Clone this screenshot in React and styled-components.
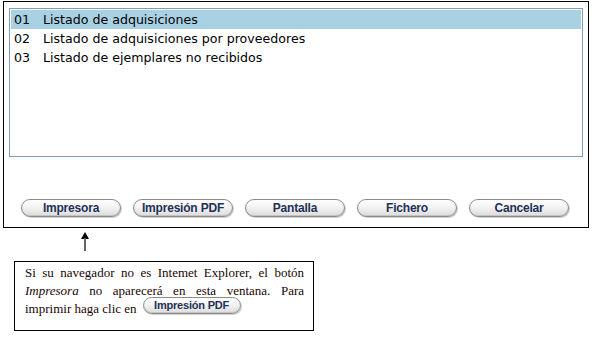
import React from "react";
import styled, { createGlobalStyle } from "styled-components";

const Global = createGlobalStyle`
  html, body { margin: 0; padding: 0; background: #fff; }
  body { font-family: "Liberation Sans", Arial, sans-serif; }
`;

const Page = styled.div`
  width: 594px;
  height: 343px;
  position: relative;
  overflow: hidden;
`;

const Frame = styled.div`
  box-sizing: border-box;
  margin: 1px 0 0 3px;
  width: 586px;
  height: 227px;
  border: 1px solid #000;
  padding: 6px 0 0 5px;
  display: flex;
  flex-direction: column;
`;

const ListBox = styled.div`
  box-sizing: border-box;
  width: 574px;
  height: 149px;
  border: 1px solid #7f9db9;
  padding: 1px 1px 0 1px;
  background: #fff;
`;

const Item = styled.div`
  display: flex;
  height: 19px;
  line-height: 19px;
  padding-left: 3px;
  font-family: "DejaVu Sans", Verdana, sans-serif;
  font-size: 12.6px;
  color: #000;
  white-space: pre;
  background: ${(p) => (p.$selected ? "#a9d1e4" : "transparent")};
`;

const Num = styled.span`
  width: 29px;
  flex: none;
`;

const ButtonRow = styled.div`
  display: flex;
  gap: 12px;
  margin: 42px 0 0 12px;
`;

const PillButton = styled.button`
  box-sizing: border-box;
  width: ${(p) => p.$w || 100}px;
  height: ${(p) => p.$h || 18}px;
  border: 1px solid #8c8c8c;
  border-radius: 9px;
  background: linear-gradient(#ffffff 0%, #f3f3f3 45%, #dcdcdc 100%);
  box-shadow: inset 0 -1px 0 #c4c4c4, 1px 1px 0 #d0d0d0;
  font-family: "Liberation Sans", Arial, sans-serif;
  font-weight: bold;
  font-size: ${(p) => p.$fs || 12}px;
  color: #1f3157;
  padding: 0;
  line-height: 1;
  display: inline-flex;
  align-items: center;
  justify-content: center;
  letter-spacing: -0.2px;
`;

const ArrowWrap = styled.div`
  margin: 4px 0 0 80px;
  height: 29px;
`;

const Note = styled.div`
  box-sizing: border-box;
  margin-left: 14px;
  width: 300px;
  height: 70px;
  border: 1px solid #000;
  padding: 2px 9px 0 10px;
  font-family: "Liberation Serif", "Times New Roman", serif;
  font-size: 13px;
  line-height: 18px;
  color: #1a0505;
  text-align: justify;
`;

const InlineBtnWrap = styled.span`
  display: inline-block;
  vertical-align: 4px;
  margin: -8px 0 0 6px;
`;

const labels = ["Impresora", "Impresión PDF", "Pantalla", "Fichero", "Cancelar"];
const items = [
  ["01", "Listado de adquisiciones"],
  ["02", "Listado de adquisiciones por proveedores"],
  ["03", "Listado de ejemplares no recibidos"],
];

export default function App() {
  return (
    <Page>
      <Global />
      <Frame>
        <ListBox>
          {items.map(([n, t], i) => (
            <Item key={n} $selected={i === 0}>
              <Num>{n}</Num>
              {t}
            </Item>
          ))}
        </ListBox>
        <ButtonRow>
          {labels.map((l) => (
            <PillButton key={l}>{l}</PillButton>
          ))}
        </ButtonRow>
      </Frame>
      <ArrowWrap>
        <svg width="10" height="20" viewBox="0 0 10 20">
          <polygon points="5,0 9,7 1,7" fill="#000" />
          <rect x="4" y="6" width="2" height="13" fill="#666" />
        </svg>
      </ArrowWrap>
      <Note>
        Si su navegador no es Intemet Explorer, el botón <i>Impresora</i> no aparecerá en esta ventana. Para imprimir haga clic en
        <InlineBtnWrap>
          <PillButton $w={98} $h={17} $fs={11}>Impresión PDF</PillButton>
        </InlineBtnWrap>
      </Note>
    </Page>
  );
}
